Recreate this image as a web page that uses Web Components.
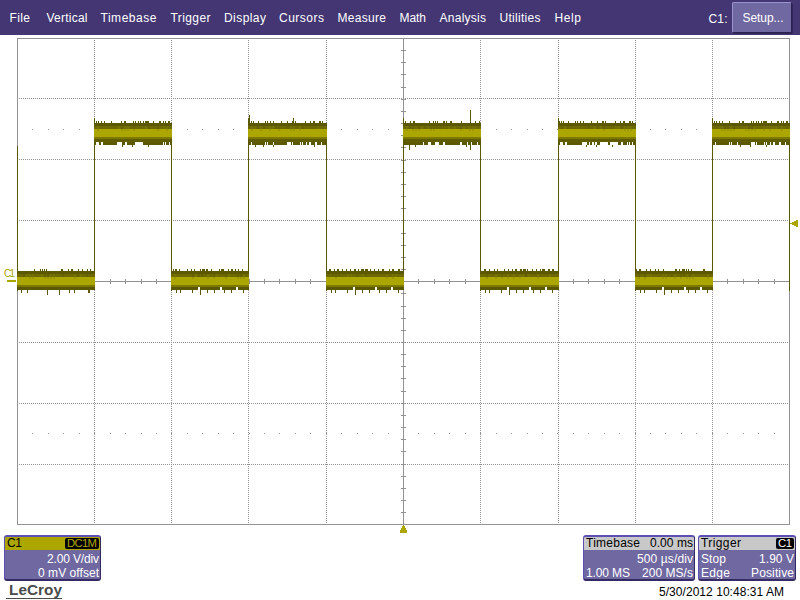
<!DOCTYPE html>
<html lang="en"><head><meta charset="utf-8"><title>LeCroy</title>
<style>
html,body{margin:0;width:800px;height:600px;overflow:hidden;background:#fff;font:12px/14px "Liberation Sans",Arial,sans-serif}
</style></head><body>
<scope-app></scope-app>
<script>
const define=(name,html,setup)=>customElements.define(name,class extends HTMLElement{
  constructor(){super();const t=document.createElement('template');t.innerHTML=html;
    this.attachShadow({mode:'open'}).append(t.content.cloneNode(true));}
  connectedCallback(){if(setup)setup(this,this.shadowRoot);}
});

// Text spread over a given advance width
define('fit-text','<style>:host{display:inline-block;white-space:pre;flex:none}span{display:inline-block}</style><span><slot></slot></span>',(el,root)=>{
  const s=root.querySelector('span'),w=+el.getAttribute('w');
  const n=el.textContent.length;
  const natural=s.getBoundingClientRect().width;
  s.style.letterSpacing=((w-natural)/(n-1))+'px';
  el.style.width=w+'px';
});

define('menu-bar',`<style>
:host{display:flex;height:35px;background:#433673;color:#fff;box-sizing:border-box;padding-left:9.5px;font-size:12px}
nav{display:grid;grid-template-columns:37px 54px 70px 53.5px 55px 58.5px 62px 40px 60px 55px 50px;padding-top:11px;height:14px;flex:none}
.src{margin:12px 0 0 104px}
</style><nav>
<fit-text w="20.5">File</fit-text><fit-text w="41">Vertical</fit-text><fit-text w="56">Timebase</fit-text><fit-text w="40">Trigger</fit-text><fit-text w="42">Display</fit-text><fit-text w="45">Cursors</fit-text><fit-text w="48.5">Measure</fit-text><fit-text w="26.5">Math</fit-text><fit-text w="46.5">Analysis</fit-text><fit-text w="41">Utilities</fit-text><fit-text w="26.5">Help</fit-text></nav>
<fit-text class="src" w="19">C1:</fit-text><setup-button><fit-text w="41">Setup...</fit-text></setup-button>`);

define('setup-button',`<style>:host{display:block;box-sizing:border-box;width:60px;height:31px;margin:2px 0 0 4.5px;padding:8px 0 0 9.5px;background:#7068a0;border:1px solid #9b94cc;border-right-color:#2b2150;border-bottom-color:#2b2150;border-radius:2px;box-shadow:1px 1px 0 #30265a}</style><slot></slot>`);

define('info-box',`<style>
:host{display:block;box-sizing:border-box;width:var(--w);height:46px;background:#7068a0;color:#fff;border:2px solid #342a64;border-right-width:1px;border-top:2px solid #5c4fb4;border-left:1px solid #5c4fb4;border-radius:3px;overflow:hidden;line-height:14px}
.title{background:var(--title,#c8c8c8);color:#000;height:13px;line-height:12px;padding:0 1px 0 2px;display:flex;justify-content:space-between}
.body{padding:2px 1px 0 2px}
</style><div class="title"><slot name="title"></slot></div><div class="body"><slot></slot></div>`);
define('info-row',`<style>:host{display:flex;height:14px;justify-content:space-between}:host([end]){justify-content:flex-end}</style><slot></slot>`);
define('mini-badge',`<style>:host{display:block;background:#000;color:var(--ink,#fff);height:11px;line-height:11px;font-size:11.3px;border-radius:2px;padding:0 2px;margin:1px 0 0}</style><slot></slot>`);
define('brand-logo',`<style>:host{display:block;width:56px;height:16px;box-sizing:border-box;padding-left:3px;color:#4a4a4a;font-size:15.3px;font-weight:bold;line-height:14px;border-bottom:1px solid #4a4a4a}</style><fit-text w="53">LeCroy</fit-text>`);

define('scope-plot','<style>:host{display:block;height:500px}svg{display:block}</style><svg width="800" height="500" viewBox="0 35 800 500" shape-rendering="crispEdges"></svg>',(el,root)=>{
  const X=[17,94,171,248,326,403,480,558,635,712,789],Y=[38,98,159,220,281,342,403,464,524];
  const grey='#929292',dark='#5b5800';
  let out='';
  const r=(x,y,w,h,f)=>out+=`<rect x="${x}" y="${y}" width="${w}" height="${h}" fill="${f}"/>`;
  const dotted=(x1,y1,x2,y2)=>out+=`<path d="M${x1} ${y1}L${x2} ${y2}" stroke="${grey}" stroke-dasharray="1 1"/>`;
  X.slice(1,-1).forEach(x=>{if(x!==403)dotted(x+.5,40,x+.5,524)});
  Y.slice(1,-1).forEach(y=>{if(y!==281)dotted(19,y+.5,789,y+.5)});
  r(17,38,773,1,grey);r(17,524,773,1,grey);r(17,38,1,487,grey);r(789,38,1,487,grey);
  r(403,38,1,487,grey);r(17,281,773,1,grey);
  for(let i=1;i<50;i++){const x=Math.round(17+i*15.44);r(x,129,1,1,grey);r(x,433,1,1,grey);r(x,279,1,5,grey);}
  for(let i=1;i<40;i++)r(401,Math.round(38+i*12.16),5,1,grey);
  r(17,146,1,145,dark);
  X.slice(1).forEach((x,i)=>r(x,i%2?123:118,1,i%2?168:170,dark));
  let seed=7;const rnd=()=>(seed=(seed*16807)%2147483647)/2147483647;
  // Offsets of the noise spikes from the left end of each trace segment
  const upHigh=[[2,1],[4,1],[7,1],[10,1],[17,1],[27,1],[30,2],[39,1],[41,1],[44,1],[46,1],[49,1],[51,4],[59,1],[65,2],[69,1],[71,1],[74,2]];
  const upHigh2=[[2,1],[7,1],[10,2],[26,1],[30,1],[32,1],[34,1],[40,2],[43,1],[47,2],[58,1],[72,1],[76,1]];
  const upHigh1=[[1,1],[3,1],[5,1],[10,1],[17,1],[19,1],[22,1],[25,1],[33,1],[39,1],[44,2],[47,1],[57,1],[62,1],[65,2],[71,2],[74,1]];
  const upLow=[[16,1],[22,1],[24,1],[26,1],[28,1],[43,2],[50,1],[53,2],[60,1],[64,1],[69,1],[72,1]];
  const highs=[upHigh,upHigh1,upHigh2,upHigh1,upHigh];
  const gapsA=[[2,3],[7,2],[24,5],[31,1],[34,2],[37,2],[42,8],[52,8],[63,2],[69,1],[71,1],[74,1]];
  const gapsA1=[[2,3],[7,2],[23,5],[31,2],[41,8],[69,1],[71,1],[75,1]];
  const gapsB=[[3,1],[17,1],[19,1],[25,1],[39,4],[44,1],[52,1],[54,1],[58,1],[61,2],[67,2],[73,1]];
  const gapsC=[[20,1],[25,3],[32,4],[40,2],[57,2],[64,1],[68,1],[74,1]];
  const gaps=[gapsA1,gapsB,gapsC,gapsA,gapsB];
  for(let i=0;i<10;i++){
    const x=X[i],w=X[i+1]-x+1,high=i%2===1;
    const y=high?123:271,k=(i-1)/2;
    r(x,y,w,high?22:19,dark);r(x,y+3,w,3,'#6d6900');r(x,y+6,w,8,'#aca700');
    r(x,y+14,w,2,'#7c7800');
    for(let j=3;j<w-4;j+=3)if(rnd()>.45){r(x+j,y+3,2,3,rnd()>.5?'#757100':'#666200');if(rnd()>.5)r(x+j,y+6,2,2,'#9d9800')}
    if(high){
      r(x,y+16,w,3,'#605c00');
      highs[k].forEach(([a,b])=>r(x+a,y-2,b,2,dark));
      gaps[k].forEach(([a,b])=>r(x+a,y+19,b,3,'#fff'));
      (k===1?[7,15,25,66]:k===2?[6,12,63,67]:[28,38,54]).forEach(a=>r(x+a,y+22,1,2,dark));
    }else{
      const shift=i===0?0:i*3;
      upLow.forEach(([a,b])=>r(x+(a+shift)%74+1,y-2,b,2,dark));
      if(i)for(let j=4;j<75;j+=4)if(rnd()>.4)r(x+j,y-2,1,2,dark);
      (i?[5,9,21,36,43,53,60,72]:[4,10,52,57,71,72]).forEach(a=>r(x+a,y+19,1,3,dark));
      (i?[29]:[30,42]).forEach(a=>r(x+a,y+19,1,5,dark));
      if(i)[27,49,65].forEach(a=>r(x+a,y+16,2,3,'#fff'));
    }
  }
  r(470,110,1,14,dark);r(470,145,1,5,dark);r(409,145,1,5,dark);r(249,115,1,8,dark);r(293,118,1,5,dark);
  const a='#aca700';
  r(403,525,1,1,a);r(402,526,3,2,a);r(401,528,5,2,a);r(400,530,7,2,a);r(400,532,7,1,a);
  r(790,223,2,1,a);r(792,222,2,3,a);r(794,221,2,5,a);r(796,220,2,7,a);
  r(7,280,9,2,a);
  out+=`<text x="4" y="277" font-size="10" textLength="11" fill="${a}">C1</text>`;
  root.querySelector('svg').innerHTML=out;
});

define('scope-app',`<style>
:host{display:block;width:800px;height:600px;background:#fff}
.boxes{display:flex;padding:0 0 0 4px;height:45px}
.right{margin-left:482px;display:flex;gap:3px}
footer{display:flex;height:18px;padding:3px 0 0 6px;box-sizing:border-box}
.date{margin:2px 0 0 597px}
</style>
<menu-bar></menu-bar><scope-plot></scope-plot>
<div class="boxes">
<info-box style="--w:97px;--title:#aca700"><fit-text slot="title" w="15">C1</fit-text><mini-badge slot="title" style="--ink:#aca700"><fit-text w="30">DC1M</fit-text></mini-badge>
<info-row end><fit-text w="52">2.00 V/div</fit-text></info-row><info-row end><fit-text w="61">0 mV offset</fit-text></info-row></info-box>
<div class="right">
<info-box style="--w:112px"><fit-text slot="title" w="54">Timebase</fit-text><fit-text slot="title" w="43">0.00 ms</fit-text>
<info-row end><fit-text w="56">500 µs/div</fit-text></info-row><info-row><fit-text w="44">1.00 MS</fit-text><fit-text w="51">200 MS/s</fit-text></info-row></info-box>
<info-box style="--w:98px"><fit-text slot="title" w="40">Trigger</fit-text><mini-badge slot="title"><fit-text w="14">C1</fit-text></mini-badge>
<info-row><fit-text w="25">Stop</fit-text><fit-text w="35">1.90 V</fit-text></info-row><info-row><fit-text w="29">Edge</fit-text><fit-text w="43">Positive</fit-text></info-row></info-box>
</div></div>
<footer><brand-logo></brand-logo><fit-text class="date" w="125">5/30/2012 10:48:31 AM</fit-text></footer>`);
</script></body></html>
